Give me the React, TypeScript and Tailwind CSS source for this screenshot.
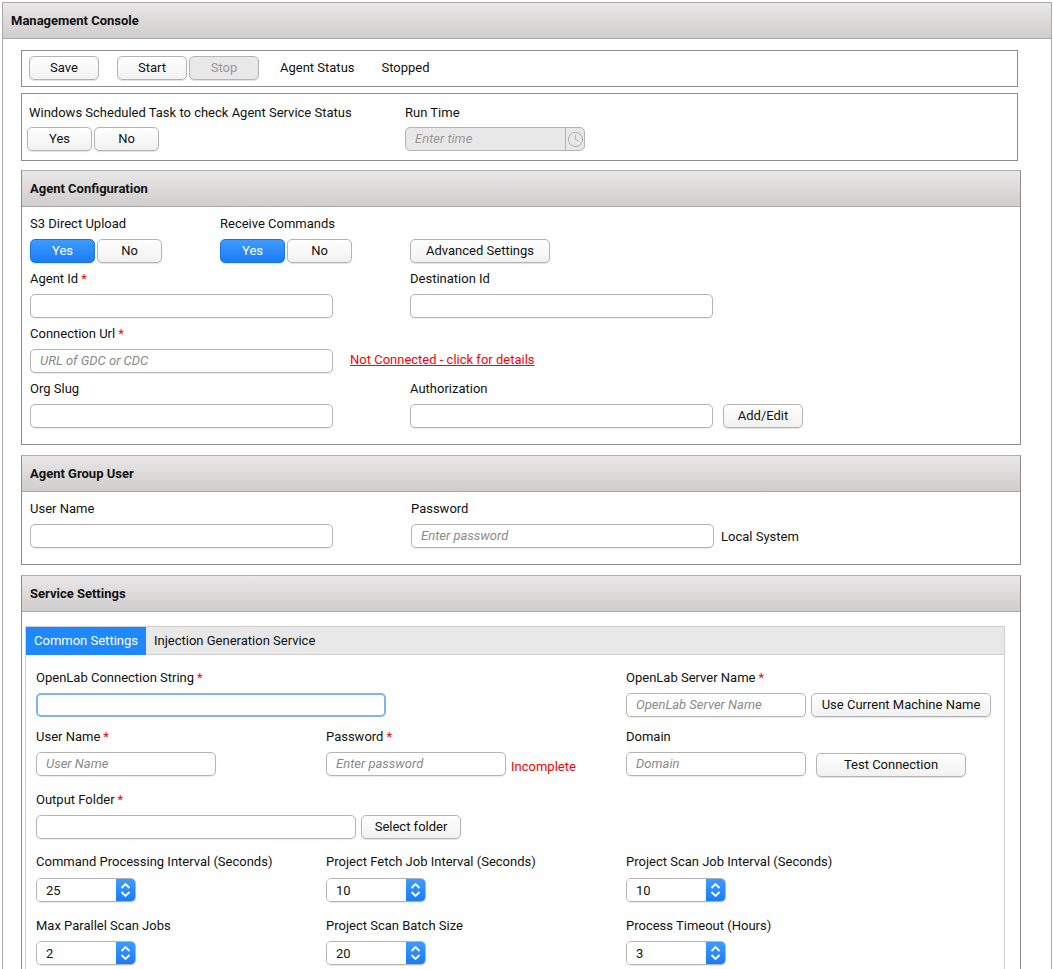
import { Clock } from "lucide-react";
import type { ReactNode } from "react";

const Req = () => <span className="ml-[3px] text-[#f00]">*</span>;

function Label({ text, required }: { text: string; required?: boolean }) {
  return (
    <div className="h-[18px] whitespace-nowrap leading-[18px]">
      {text}
      {required && <Req />}
    </div>
  );
}

function Btn({ children, className = "", active = false, disabled = false }: { children: ReactNode; className?: string; active?: boolean; disabled?: boolean }) {
  const look = active
    ? "border-[#1a74e0] bg-gradient-to-b from-[#3d9bff] to-[#1a7bf5] text-white"
    : disabled
      ? "border-[#b4b4b4] bg-[#e8e8e8] text-[#999]"
      : "border-[#b4b4b4] bg-gradient-to-b from-white to-[#f1f1f1] text-[#111]";
  return (
    <button className={`h-6 shrink-0 rounded-[5px] border text-center leading-[22px] shadow-[0_1px_1px_rgba(0,0,0,0.12)] ${look} ${className}`}>
      {children}
    </button>
  );
}

function Input({ className = "", placeholder }: { className?: string; placeholder?: string }) {
  return (
    <div className={`h-6 shrink-0 rounded-[5px] border border-[#b4b4b4] bg-white pl-[9px] italic leading-[22px] text-[#8a8a8a] shadow-[0_1px_1px_rgba(0,0,0,0.08)] ${className}`}>
      {placeholder}
    </div>
  );
}

function YesNo({ on = false }: { on?: boolean }) {
  return (
    <div className="flex gap-[2px]">
      <Btn active={on} className="w-[65px]">Yes</Btn>
      <Btn className="w-[65px]">No</Btn>
    </div>
  );
}

function Spinner({ value }: { value: string }) {
  return (
    <div className="flex h-6 w-[100px] overflow-hidden rounded-[5px] border border-[#b4b4b4] shadow-[0_1px_1px_rgba(0,0,0,0.1)]">
      <div className="flex-1 bg-white pl-[9px] leading-[24px] text-[#111]">{value}</div>
      <div className="flex w-[19px] flex-col items-center justify-center bg-gradient-to-b from-[#3d9bff] to-[#1a7bf5]">
        <svg width="13" height="20" viewBox="0 0 13 20" fill="none" stroke="white" strokeWidth="1.8">
          <path d="M2.5 8l4-4 4 4" />
          <path d="M2.5 12l4 4 4-4" />
        </svg>
      </div>
    </div>
  );
}

function Panel({ title, children }: { title: string; children: ReactNode }) {
  return (
    <div className="w-[1000px] border border-[#8c8c8c] border-t-[#b0b0b0]">
      <div className="flex h-[36px] items-center border-b border-[#a9a9a9] bg-gradient-to-b from-[#e9e7e7] to-[#d0cdcd] pl-2 font-bold text-[#111]">
        {title}
      </div>
      {children}
    </div>
  );
}

export default function App() {
  return (
    <div className="h-[969px] w-[1053px] overflow-hidden bg-white pl-[2px] pt-[2px] font-['Roboto',sans-serif] text-[13px] text-[#111]">
      <div className="h-[1100px] w-[1050px] border border-[#a9a9a9]">
        <div className="flex h-[36px] items-center border-b border-[#a9a9a9] bg-gradient-to-b from-[#e9e7e7] to-[#d0cdcd] pl-2 font-bold">
          Management Console
        </div>

        <div className="pl-[18px] pt-[11px]">
          <div className="flex h-[37px] w-[997px] items-start border border-[#8c8c8c] pl-[7px] pt-[5px]">
            <Btn className="w-[70px]">Save</Btn>
            <Btn className="ml-[18px] w-[70px]">Start</Btn>
            <Btn disabled className="ml-[2px] w-[70px]">Stop</Btn>
            <span className="ml-[21px] leading-6">Agent Status</span>
            <span className="ml-[27px] leading-6">Stopped</span>
          </div>

          <div className="mt-[6px] flex h-[68px] w-[997px] border border-[#8c8c8c] pl-[5px] pt-[10px]">
            <div className="w-[378px]">
              <div className="pl-[2px]"><Label text="Windows Scheduled Task to check Agent Service Status" /></div>
              <div className="mt-[5px]"><YesNo /></div>
            </div>
            <div>
              <Label text="Run Time" />
              <div className="mt-[5px] flex h-6 w-[180px] overflow-hidden rounded-[5px] border border-[#b4b4b4] bg-[#e8e8e8] italic leading-[22px] text-[#999]">
                <div className="flex-1 pl-[9px]">Enter time</div>
                <div className="flex w-[19px] items-center justify-center border-l border-[#b4b4b4]">
                  <Clock size={17} strokeWidth={1} className="text-[#999]" />
                </div>
              </div>
            </div>
          </div>

          <div className="mt-[9px]">
            <Panel title="Agent Configuration">
              <div className="h-[237px] pl-2 pt-[8px]">
                <div className="flex">
                  <div className="w-[190px]">
                    <Label text="S3 Direct Upload" />
                    <div className="mt-[6px]"><YesNo on /></div>
                  </div>
                  <div className="w-[190px]">
                    <Label text="Receive Commands" />
                    <div className="mt-[6px]"><YesNo on /></div>
                  </div>
                  <div className="pt-[24px]"><Btn className="w-[140px]">Advanced Settings</Btn></div>
                </div>
                <div className="mt-[7px] flex">
                  <div className="w-[380px]">
                    <Label text="Agent Id" required />
                    <Input className="mt-[6px] w-[303px]" />
                  </div>
                  <div>
                    <Label text="Destination Id" />
                    <Input className="mt-[6px] w-[303px]" />
                  </div>
                </div>
                <div className="mt-[7px]">
                  <Label text="Connection Url" required />
                  <div className="mt-[6px] flex items-center">
                    <Input className="w-[303px]" placeholder="URL of GDC or CDC" />
                    <a className="mb-[2px] ml-[17px] text-[#f00] underline">Not Connected - click for details</a>
                  </div>
                </div>
                <div className="mt-[7px] flex">
                  <div className="w-[380px]">
                    <Label text="Org Slug" />
                    <Input className="mt-[6px] w-[303px]" />
                  </div>
                  <div>
                    <Label text="Authorization" />
                    <div className="mt-[6px] flex gap-[10px]">
                      <Input className="w-[303px]" />
                      <Btn className="w-[80px]">Add/Edit</Btn>
                    </div>
                  </div>
                </div>
              </div>
            </Panel>
          </div>

          <div className="mt-[10px]">
            <Panel title="Agent Group User">
              <div className="flex h-[72px] pl-2 pt-[8px]">
                <div className="w-[381px]">
                  <Label text="User Name" />
                  <Input className="mt-[6px] w-[303px]" />
                </div>
                <div>
                  <Label text="Password" />
                  <div className="mt-[6px] flex items-center gap-[7px]">
                    <Input className="w-[303px]" placeholder="Enter password" />
                    <span className="pt-px">Local System</span>
                  </div>
                </div>
              </div>
            </Panel>
          </div>

          <div className="mt-[10px]">
            <Panel title="Service Settings">
              <div className="pl-[3px] pt-[14px]">
                <div className="w-[980px] border border-[#d0d0d0]">
                  <div className="flex h-[28px] items-center border-b border-[#d0d0d0] bg-[#e8e8e8]">
                    <div className="flex h-[28px] w-[120px] items-center justify-center bg-[#1e88ff] text-white">Common Settings</div>
                    <div className="pl-2">Injection Generation Service</div>
                  </div>
                  <div className="pb-4 pl-[10px] pt-[14px]">
                    <div className="flex">
                      <div className="w-[590px]">
                        <Label text="OpenLab Connection String" required />
                        <div className="mt-[6px] h-6 w-[350px] rounded-[5px] border-2 border-[#7fb4f0] bg-white" />
                      </div>
                      <div>
                        <Label text="OpenLab Server Name" required />
                        <div className="mt-[6px] flex gap-[5px]">
                          <Input className="w-[180px]" placeholder="OpenLab Server Name" />
                          <Btn className="w-[180px]">Use Current Machine Name</Btn>
                        </div>
                      </div>
                    </div>
                    <div className="mt-[11px] flex">
                      <div className="w-[290px]">
                        <Label text="User Name" required />
                        <Input className="mt-[6px] w-[180px]" placeholder="User Name" />
                      </div>
                      <div className="w-[300px]">
                        <Label text="Password" required />
                        <div className="mt-[6px] flex items-center gap-[5px]">
                          <Input className="w-[180px]" placeholder="Enter password" />
                          <span className="pt-[5px] text-[#f00]">Incomplete</span>
                        </div>
                      </div>
                      <div>
                        <Label text="Domain" />
                        <div className="mt-[6px] flex gap-[10px]">
                          <Input className="w-[180px]" placeholder="Domain" />
                          <Btn className="mt-px w-[150px]">Test Connection</Btn>
                        </div>
                      </div>
                    </div>
                    <div className="mt-[14px]">
                      <Label text="Output Folder" required />
                      <div className="mt-[6px] flex gap-[5px]">
                        <Input className="w-[320px]" />
                        <Btn className="w-[100px]">Select folder</Btn>
                      </div>
                    </div>
                    <div className="mt-[14px] flex">
                      <div className="w-[290px]">
                        <Label text="Command Processing Interval (Seconds)" />
                        <div className="mt-[7px]"><Spinner value="25" /></div>
                      </div>
                      <div className="w-[300px]">
                        <Label text="Project Fetch Job Interval (Seconds)" />
                        <div className="mt-[7px]"><Spinner value="10" /></div>
                      </div>
                      <div>
                        <Label text="Project Scan Job Interval (Seconds)" />
                        <div className="mt-[7px]"><Spinner value="10" /></div>
                      </div>
                    </div>
                    <div className="mt-[15px] flex">
                      <div className="w-[290px]">
                        <Label text="Max Parallel Scan Jobs" />
                        <div className="mt-[6px]"><Spinner value="2" /></div>
                      </div>
                      <div className="w-[300px]">
                        <Label text="Project Scan Batch Size" />
                        <div className="mt-[6px]"><Spinner value="20" /></div>
                      </div>
                      <div>
                        <Label text="Process Timeout (Hours)" />
                        <div className="mt-[6px]"><Spinner value="3" /></div>
                      </div>
                    </div>
                  </div>
                </div>
              </div>
            </Panel>
          </div>
        </div>
      </div>
    </div>
  );
}
